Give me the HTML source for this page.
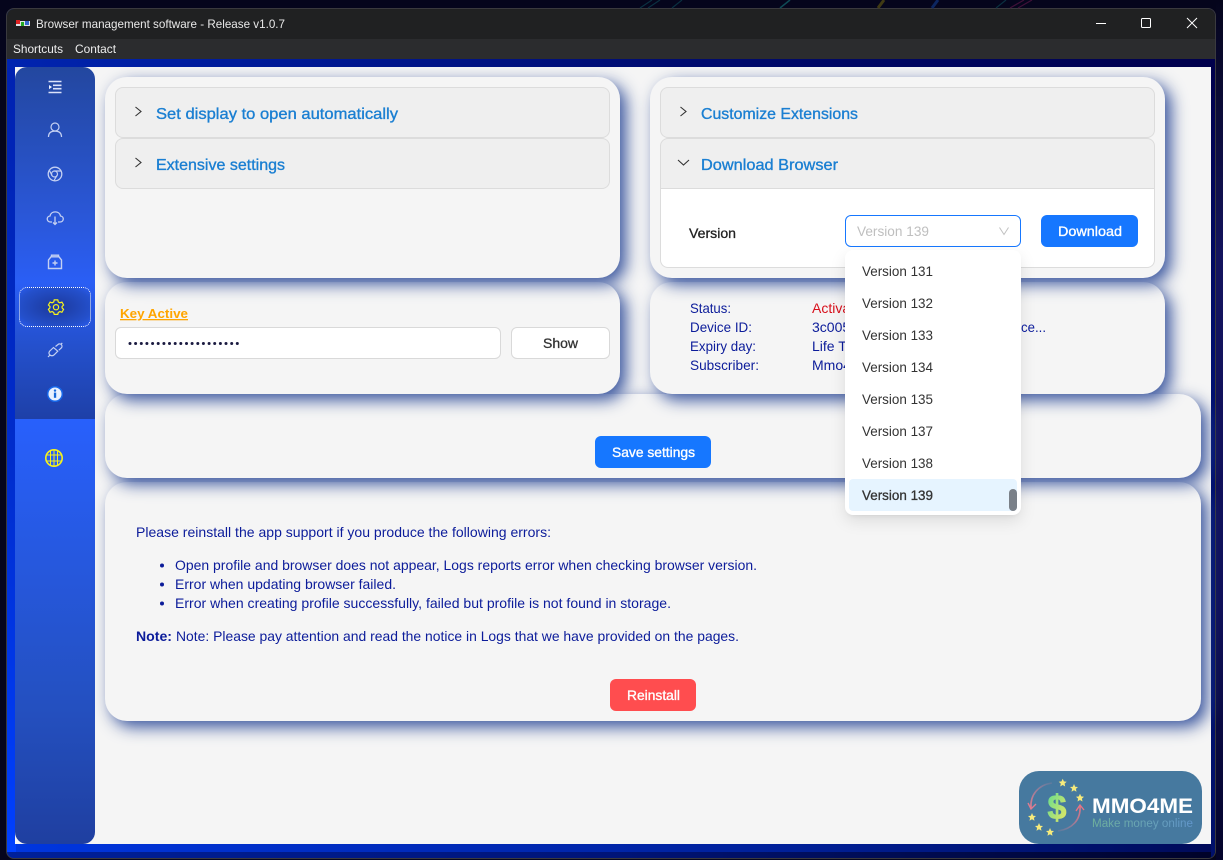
<!DOCTYPE html>
<html><head><meta charset="utf-8"><title>Browser management software</title>
<style>
html,body{margin:0;padding:0;width:1223px;height:860px;overflow:hidden;background:#05051c;font-family:"Liberation Sans",sans-serif}
div{position:absolute;box-sizing:border-box}
.card{background:#f5f5f5;border-radius:22px;box-shadow:6px 6px 16px rgba(40,70,150,.92)}
.hd{background:#efefef;border:1px solid #dcdcdc}
.btn{border-radius:6px;background:#1677ff}
svg{position:absolute;left:0;top:0}
text{white-space:pre}
</style></head><body>
<div style="left:1216px;top:0;width:7px;height:860px;background:linear-gradient(#05051c,#14145e 30%,#10105a 70%,#04042a)"></div>
<div style="left:6px;top:8px;width:1210px;height:851px;border-radius:8px;overflow:hidden;background:linear-gradient(90deg,#0036e0,#002098 65%,#000a58);border:1px solid #3a3a3e">
  <div style="left:0;top:50px;width:9px;height:793px;background:linear-gradient(#0022b0,#002ccc 50%,#0040ff)"></div>
  <div style="left:0;top:843px;width:1210px;height:8px;background:linear-gradient(90deg,#00209a,#001478 50%,#000228)"></div>
  <div style="left:0;top:0;width:1210px;height:30px;background:#202122"></div>
  <div style="left:0;top:30px;width:1210px;height:20px;background:#2b2c2e"></div>
  <div style="left:0;top:50px;width:1210px;height:9px;background:linear-gradient(90deg,#0024b0,#000c70 55%,#00004c)"></div>
  <div style="left:1204px;top:59px;width:5px;height:790px;background:linear-gradient(#00004c,#001070 40%,#00106a)"></div>
</div>
<div style="left:15px;top:67px;width:1196px;height:777px;background:#f5f5f5"></div>
<div style="left:15px;top:67px;width:80px;height:777px;border-radius:12px;background:linear-gradient(#23479f 0,#2a57d8 150px,#2a5ef5 215px,#2450cc 280px,#1e40a8 352px,#2860fc 352px,#2450c0 640px,#1f3fa0 777px)"></div>
<div style="left:19px;top:287px;width:72px;height:40px;border-radius:8px;border:1px dotted #fff;background:radial-gradient(ellipse at center,#1e3fa8 20%,#2450cc 75%,#2a5cf0)"></div>

<div class="card" style="left:105px;top:482px;width:1096px;height:239px;z-index:1"></div>
<div class="card" style="left:105px;top:394px;width:1096px;height:84px;z-index:2"></div>
<div class="card" style="left:105px;top:282px;width:515px;height:112px;z-index:3"></div>
<div class="card" style="left:650px;top:282px;width:515px;height:112px;z-index:3"></div>
<div class="card" style="left:105px;top:77px;width:515px;height:201px;z-index:4"></div>
<div class="card" style="left:650px;top:77px;width:515px;height:201px;z-index:4"></div>

<div style="left:115px;top:87px;width:495px;height:102px;z-index:5">
  <div class="hd" style="left:0;top:0;width:495px;height:51px;border-radius:8px"></div>
  <div class="hd" style="left:0;top:51px;width:495px;height:51px;border-radius:8px"></div>
</div>
<div style="left:660px;top:87px;width:495px;height:181px;z-index:5">
  <div class="hd" style="left:0;top:0;width:495px;height:51px;border-radius:8px"></div>
  <div class="hd" style="left:0;top:51px;width:495px;height:51px;border-radius:8px 8px 0 0"></div>
  <div style="left:0;top:102px;width:495px;height:79px;background:#fff;border:1px solid #dcdcdc;border-top:0;border-radius:0 0 8px 8px"></div>
</div>
<div style="left:845px;top:215px;width:176px;height:32px;z-index:5;background:#fff;border:1px solid #1677ff;border-radius:6px"></div>
<div class="btn" style="left:1041px;top:215px;width:97px;height:32px;z-index:5"></div>
<div style="left:115px;top:327px;width:386px;height:32px;z-index:5;background:#fff;border:1px solid #d9d9d9;border-radius:6px"></div>
<div style="left:511px;top:327px;width:99px;height:32px;z-index:5;background:#fff;border:1px solid #d9d9d9;border-radius:6px"></div>
<div class="btn" style="left:595px;top:436px;width:116px;height:32px;z-index:5"></div>
<div style="left:610px;top:679px;width:86px;height:32px;z-index:5;background:#ff4d4f;border-radius:6px"></div>

<svg width="1223" height="860" style="z-index:6">
  <defs><clipPath id="c"><rect x="600" y="290" width="245" height="100"/></clipPath></defs>
  <g clip-path="url(#c)" font-size="14" fill="#0c1c9a">
    <text x="812" y="313" fill="#d8101c">Activated</text>
    <text x="812" y="332">3c005b7e</text>
    <text x="812" y="351">Life Time</text>
    <text x="812" y="370">Mmo4me</text>
  </g>
</svg>

<div style="left:845px;top:250px;width:176px;height:265px;z-index:7;background:#fff;border-radius:8px;box-shadow:0 6px 16px rgba(0,0,0,.1),0 3px 6px -4px rgba(0,0,0,.14)">
  <div style="left:4px;top:229px;width:168px;height:32px;background:#e6f4ff;border-radius:4px"></div>
  <div style="left:164px;top:239px;width:8px;height:22px;background:#7a8088;border-radius:4px"></div>
</div>

<svg width="1223" height="860" style="z-index:8" font-family="'Liberation Sans',sans-serif">
  <!-- wallpaper streaks -->
  <path d="M640 8L652 0M648 8L660 0M672 8L682 0M996 8L1006 0" stroke="#0a3040" stroke-width="1.2" fill="none"/>
  <path d="M780 8L790 0" stroke="#0e4a54" stroke-width="1.5" fill="none"/>
  <path d="M878 8L884 0" stroke="#403a14" stroke-width="3" fill="none"/>
  <path d="M932 8L938 0" stroke="#0c2660" stroke-width="3" fill="none"/>
  <path d="M1010 8L1024 0M1018 8L1032 0" stroke="#401038" stroke-width="1.2" fill="none"/>
  <!-- title bar -->
  <rect x="16" y="21" width="14" height="5" fill="#dfe4ea"/>
  <rect x="16" y="20" width="4" height="4" fill="#d22"/><rect x="21" y="22" width="3" height="4" fill="#2a2"/><rect x="25" y="21" width="4" height="4" fill="#36c"/>
  <text x="36" y="28" font-size="12" fill="#e8e8e8" textLength="249" lengthAdjust="spacingAndGlyphs">Browser management software - Release v1.0.7</text>
  <text x="13" y="53" font-size="12" fill="#eee" textLength="50" lengthAdjust="spacingAndGlyphs">Shortcuts</text>
  <text x="75" y="53" font-size="12" fill="#eee" textLength="41" lengthAdjust="spacingAndGlyphs">Contact</text>
  <path d="M1096 23.5H1106" stroke="#fff" fill="none"/>
  <rect x="1141.5" y="18.5" width="9" height="9" rx="1" stroke="#fff" fill="none"/>
  <path d="M1187 18L1197 28M1197 18L1187 28" stroke="#fff" fill="none"/>

  <!-- sidebar icons -->
  <g fill="none" stroke="#c4d0f2" stroke-width="1.2">
    <path d="M48.5 81.5H61.5M53 85.3H61.5M53 88.7H61.5M48.5 92.5H61.5" stroke="#dbe2fa" stroke-width="1.6"/>
    <path d="M49 85V89.2L52 87Z" fill="#eef2ff" stroke="none"/>
    <circle cx="55" cy="127" r="4"/>
    <path d="M48.5 137C48.5 133 51 131.1 55 131.1S61.5 133 61.5 137" stroke-width="1.3"/>
    <circle cx="55" cy="174" r="6.8" stroke-width="1.3"/><circle cx="54.5" cy="174" r="3"/>
    <path d="M54.5 171H61M52 175.5L49.3 170.2M57 175.5L54 180.5"/>
    <path d="M50.5 222C46.5 222 46 216.5 50 216C51 210.5 59.5 210.5 60.5 216C64.5 216.5 64 222 60 222H58M52 222H50.5M55 216.5V224.5M53 222.5L55 224.5L57 222.5" stroke-width="1.3"/>
    <path d="M48.5 268.5V260L51 256.8H59L61.5 260V268.5ZM51.5 256.8V255.2H58.5V256.8M55 260.5V265.5M52.5 263H57.5" stroke-width="1.4"/>
    <path d="M53.5 347.5L49.8 351C48.5 352.5 48.8 354 50 355C51.3 356 53 356 54.3 354.7L57.8 351.2ZM55.5 346.5L58 344.5C59 343.6 60.8 343.8 61.3 344.6C62.2 345.5 62.2 347 61.3 348L58.8 350.2M48 357L50 355M62.3 343L60.8 344.3" stroke-width="1.2"/>
  </g>
  <g fill="none" stroke="#f6f21c" stroke-width="1.4">
    <path d="M54 299.5H58L58.6 301.8L60.4 302.8L62.7 302L64.6 305.3L62.9 307L62.9 308.6L64.6 310.3L62.7 313.6L60.4 312.8L58.6 313.8L58 316H54L53.4 313.8L51.6 312.8L49.3 313.6L47.4 310.3L49.1 308.6L49.1 307L47.4 305.3L49.3 302L51.6 302.8L53.4 301.8Z" transform="translate(56 307.2) scale(.88) translate(-56 -307.8)"/>
    <circle cx="56" cy="307.2" r="2.6" stroke-width="1.2"/>
    <circle cx="54" cy="458" r="8.2" stroke-width="1.6"/>
    <path d="M46 455H62M46 461H62M50.5 451V465M54 450V466M57.5 451V465" stroke-width="1"/>
  </g>
  <circle cx="55" cy="394" r="7.3" fill="#e8f0ff" stroke="#1767e8" stroke-width="1.5"/>
  <circle cx="55" cy="390.6" r="1.2" fill="#1667d8"/><rect x="53.9" y="392.6" width="2.3" height="5.2" fill="#1667d8"/>

  <!-- chevrons -->
  <g fill="none" stroke="#333" stroke-width="1.1">
    <path d="M135.5 107L141 111.5L135.5 116M135.5 158L141 162.5L135.5 167M680.5 107L686 111.5L680.5 116M678 160L683.5 165L689 160"/>
  </g>
  <path d="M999.5 227.5L1004 234.5L1008.5 227.5" fill="none" stroke="#c0c0c0" stroke-width="1"/>

  <g font-size="16" fill="#1a7fd2" stroke="#1a7fd2" stroke-width=".35">
    <text x="156" y="119" textLength="242" lengthAdjust="spacingAndGlyphs">Set display to open automatically</text>
    <text x="156" y="170" textLength="129" lengthAdjust="spacingAndGlyphs">Extensive settings</text>
    <text x="701" y="119" textLength="157" lengthAdjust="spacingAndGlyphs">Customize Extensions</text>
    <text x="701" y="170" textLength="137" lengthAdjust="spacingAndGlyphs">Download Browser</text>
  </g>
  <text x="689" y="238" font-size="14" fill="#222" stroke="#222" stroke-width=".3" textLength="47" lengthAdjust="spacingAndGlyphs">Version</text>
  <text x="857" y="236" font-size="14" fill="#bfbfbf" textLength="72" lengthAdjust="spacingAndGlyphs">Version 139</text>
  <g fill="#fff" stroke="#fff" stroke-width=".35" font-size="14">
    <text x="1058" y="236" textLength="64" lengthAdjust="spacingAndGlyphs">Download</text>
    <text x="612" y="457" textLength="83" lengthAdjust="spacingAndGlyphs">Save settings</text>
    <text x="627" y="700" textLength="53" lengthAdjust="spacingAndGlyphs">Reinstall</text>
  </g>
  <text x="543" y="348" font-size="14" fill="#333" stroke="#333" stroke-width=".3" textLength="35" lengthAdjust="spacingAndGlyphs">Show</text>

  <g font-size="14" fill="#333">
    <text x="862" y="276" textLength="71" lengthAdjust="spacingAndGlyphs">Version 131</text>
    <text x="862" y="308" textLength="71" lengthAdjust="spacingAndGlyphs">Version 132</text>
    <text x="862" y="340" textLength="71" lengthAdjust="spacingAndGlyphs">Version 133</text>
    <text x="862" y="372" textLength="71" lengthAdjust="spacingAndGlyphs">Version 134</text>
    <text x="862" y="404" textLength="71" lengthAdjust="spacingAndGlyphs">Version 135</text>
    <text x="862" y="436" textLength="71" lengthAdjust="spacingAndGlyphs">Version 137</text>
    <text x="862" y="468" textLength="71" lengthAdjust="spacingAndGlyphs">Version 138</text>
    <text x="862" y="500" textLength="71" lengthAdjust="spacingAndGlyphs" stroke="#333" stroke-width=".3">Version 139</text>
  </g>

  <text x="120" y="318" font-size="13" font-weight="bold" fill="#ffa500" text-decoration="underline" textLength="68" lengthAdjust="spacingAndGlyphs">Key Active</text>
  <g fill="#1a1a40"><circle cx="130" cy="343.5" r="1.5"/><circle cx="135.6" cy="343.5" r="1.5"/><circle cx="141.3" cy="343.5" r="1.5"/><circle cx="146.9" cy="343.5" r="1.5"/><circle cx="152.6" cy="343.5" r="1.5"/><circle cx="158.2" cy="343.5" r="1.5"/><circle cx="163.9" cy="343.5" r="1.5"/><circle cx="169.5" cy="343.5" r="1.5"/><circle cx="175.2" cy="343.5" r="1.5"/><circle cx="180.8" cy="343.5" r="1.5"/><circle cx="186.5" cy="343.5" r="1.5"/><circle cx="192.1" cy="343.5" r="1.5"/><circle cx="197.8" cy="343.5" r="1.5"/><circle cx="203.4" cy="343.5" r="1.5"/><circle cx="209.1" cy="343.5" r="1.5"/><circle cx="214.7" cy="343.5" r="1.5"/><circle cx="220.4" cy="343.5" r="1.5"/><circle cx="226" cy="343.5" r="1.5"/><circle cx="231.7" cy="343.5" r="1.5"/><circle cx="237.3" cy="343.5" r="1.5"/></g>

  <g font-size="14" fill="#0c1c9a">
    <text x="690" y="313" textLength="41" lengthAdjust="spacingAndGlyphs">Status:</text>
    <text x="690" y="332" textLength="62" lengthAdjust="spacingAndGlyphs">Device ID:</text>
    <text x="690" y="351" textLength="66" lengthAdjust="spacingAndGlyphs">Expiry day:</text>
    <text x="690" y="370" textLength="69" lengthAdjust="spacingAndGlyphs">Subscriber:</text>
    <text x="1021" y="332" textLength="25" lengthAdjust="spacingAndGlyphs">ce...</text>
    <text x="136" y="537" textLength="415" lengthAdjust="spacingAndGlyphs">Please reinstall the app support if you produce the following errors:</text>
    <text x="175" y="570" textLength="582" lengthAdjust="spacingAndGlyphs">Open profile and browser does not appear, Logs reports error when checking browser version.</text>
    <text x="175" y="589" textLength="221" lengthAdjust="spacingAndGlyphs">Error when updating browser failed.</text>
    <text x="175" y="608" textLength="496" lengthAdjust="spacingAndGlyphs">Error when creating profile successfully, failed but profile is not found in storage.</text>
    <text x="136" y="641" font-weight="bold" textLength="36" lengthAdjust="spacingAndGlyphs">Note:</text>
    <text x="176" y="641" textLength="563" lengthAdjust="spacingAndGlyphs">Note: Please pay attention and read the notice in Logs that we have provided on the pages.</text>
    <circle cx="162" cy="565.5" r="2"/><circle cx="162" cy="584.5" r="2"/><circle cx="162" cy="603.5" r="2"/>
  </g>

  <!-- logo -->
  <rect x="1019" y="771" width="183" height="73" rx="20" fill="#46799f"/>
  <defs><linearGradient id="d" x1="0" y1="0" x2="1" y2="1"><stop offset="0" stop-color="#5fdc90"/><stop offset="1" stop-color="#f0e860"/></linearGradient>
  <linearGradient id="e" x1="0" y1="0" x2="1" y2="0"><stop offset="0" stop-color="#6fb09c"/><stop offset="1" stop-color="#6296cc"/></linearGradient>
  <linearGradient id="f" gradientUnits="userSpaceOnUse" x1="1052" y1="783" x2="1031" y2="808"><stop offset="0" stop-color="#d88498" stop-opacity=".15"/><stop offset="1" stop-color="#e07c90"/></linearGradient>
  <linearGradient id="g" gradientUnits="userSpaceOnUse" x1="1058" y1="831" x2="1080" y2="806"><stop offset="0" stop-color="#d88498" stop-opacity=".15"/><stop offset="1" stop-color="#e87484"/></linearGradient></defs>
  <text x="1057" y="819" font-size="34" font-weight="bold" text-anchor="middle" fill="url(#d)" stroke="url(#d)" stroke-width=".8">$</text>
  <path d="M1052 783C1038 785 1030 795 1031 808" fill="none" stroke="url(#f)" stroke-width="1.6"/>
  <path d="M1028 803L1031 809L1036 804" fill="none" stroke="#e07c90" stroke-width="1.4"/>
  <path d="M1058 831C1072 829 1081 820 1080 806" fill="none" stroke="url(#g)" stroke-width="1.6"/>
  <path d="M1076 811L1080 805L1084 810" fill="none" stroke="#e87484" stroke-width="1.4"/>
  <g fill="#f6ea7c">
    <path transform="translate(1062.7 782.7)" d="M0-4L1.2-1.3 4-1 1.9.9 2.5 3.8 0 2.3-2.5 3.8-1.9.9-4-1-1.2-1.3Z"/>
    <path transform="translate(1074 788)" d="M0-4L1.2-1.3 4-1 1.9.9 2.5 3.8 0 2.3-2.5 3.8-1.9.9-4-1-1.2-1.3Z"/>
    <path transform="translate(1080 797.7)" d="M0-4L1.2-1.3 4-1 1.9.9 2.5 3.8 0 2.3-2.5 3.8-1.9.9-4-1-1.2-1.3Z"/>
    <path transform="translate(1032 817)" d="M0-4L1.2-1.3 4-1 1.9.9 2.5 3.8 0 2.3-2.5 3.8-1.9.9-4-1-1.2-1.3Z"/>
    <path transform="translate(1039 827)" d="M0-4L1.2-1.3 4-1 1.9.9 2.5 3.8 0 2.3-2.5 3.8-1.9.9-4-1-1.2-1.3Z"/>
    <path transform="translate(1050 832)" d="M0-4L1.2-1.3 4-1 1.9.9 2.5 3.8 0 2.3-2.5 3.8-1.9.9-4-1-1.2-1.3Z"/>
  </g>
  <text x="1092" y="813" font-size="21" font-weight="bold" fill="#fff" textLength="101" lengthAdjust="spacingAndGlyphs">MMO4ME</text>
  <text x="1092" y="827" font-size="11.5" fill="url(#e)" textLength="101" lengthAdjust="spacingAndGlyphs">Make money online</text>
</svg>
</body></html>
